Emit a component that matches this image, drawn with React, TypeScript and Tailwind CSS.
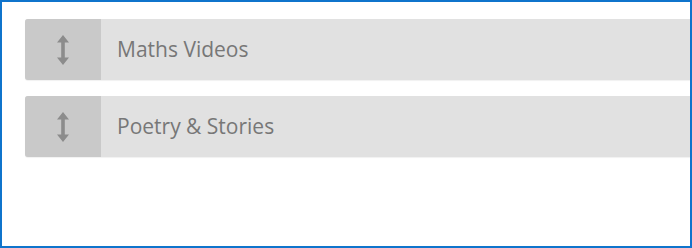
import React from "react";

const Arrow = () => (
  <svg width="12" height="30" viewBox="0 0 12 30" className="block mt-[1px]">
    <path d="M6 0 L12 7.5 L7.8 7.5 L7.8 22.5 L12 22.5 L6 30 L0 22.5 L4.2 22.5 L4.2 7.5 L0 7.5 Z" fill="#8c8c8c" />
  </svg>
);

const Row = ({ label }: { label: string }) => (
  <div className="flex h-[61px] w-full bg-[#e1e1e1] rounded-l-[3px] shadow-[0_1px_1px_rgba(0,0,0,0.06)]">
    <div className="w-[76px] shrink-0 flex items-center justify-center bg-[#c9c9c9] rounded-l-[3px]">
      <Arrow />
    </div>
    <div className="flex items-center pl-[16px] pt-[1px] text-[21px] text-[#777777] font-['Open_Sans',sans-serif]">
      {label}
    </div>
  </div>
);

export default function App() {
  return (
    <div className="w-[692px] h-[248px] border-2 border-[#0f74cc] bg-white pl-[23px] pt-[17px] flex flex-col gap-[16px] box-border">
      <Row label="Maths Videos" />
      <Row label="Poetry & Stories" />
    </div>
  );
}
